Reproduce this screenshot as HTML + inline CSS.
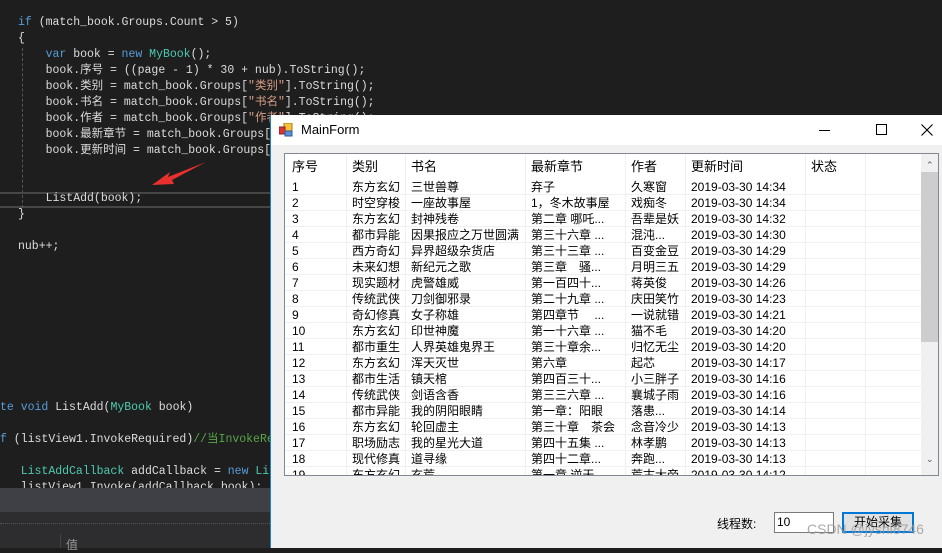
<!DOCTYPE html>
<html><head><meta charset="utf-8"><style>
*{margin:0;padding:0;box-sizing:border-box}
body{width:942px;height:548px;overflow:hidden;background:#1e1e1e;position:relative;font-family:"Liberation Sans","Noto Sans CJK SC",sans-serif}
.code{position:absolute;left:0;font-family:"Liberation Mono","Noto Sans CJK SC",monospace;font-size:11.5px;color:#dcdcdc;white-space:pre;line-height:16px}
.k{color:#569cd6}.t{color:#4ec9b0}.s{color:#d69d85}.c{color:#57a64a}
.win{position:absolute;left:270px;top:115px;width:672px;height:433px;background:#f0f0f0;border-left:1px solid #1883d7}
.tb{height:30px;background:#fff;position:relative;font-size:13px;color:#000}
.lv{position:absolute;left:13px;top:38px;width:655px;height:323px;background:#fff;border:1px solid #828790;overflow:hidden}
.row{position:absolute;left:0;height:16px;width:636px;border-bottom:1px solid #f0f0f0;font-size:12px;line-height:16px;color:#000}
.row span{position:absolute;top:0;white-space:nowrap;overflow:hidden}
.vl{position:absolute;top:0;width:1px;height:323px;background:#f0f0f0}
</style></head><body>
<div style="position:absolute;left:0;top:192px;width:270px;height:16px;border-top:2px solid #464646;border-bottom:2px solid #464646"></div>
<div class="code" style="top:15px;left:18px"><span class="k">if</span> (match_book.Groups.Count &gt; 5)
{
    <span class="k">var</span> book = <span class="k">new</span> <span class="t">MyBook</span>();
    book.序号 = ((page - 1) * 30 + nub).ToString();
    book.类别 = match_book.Groups[<span class="s">"类别"</span>].ToString();
    book.书名 = match_book.Groups[<span class="s">"书名"</span>].ToString();
    book.作者 = match_book.Groups[<span class="s">"作者"</span>].ToString();
    book.最新章节 = match_book.Groups[<span class="s">"最新章节"</span>];
    book.更新时间 = match_book.Groups[<span class="s">"更新时间"</span>];


    ListAdd(book);
}

nub++;</div>
<div style="position:absolute;left:22px;top:48px;width:0;height:160px;border-left:1px dashed #555"></div>
<svg style="position:absolute;left:150px;top:160px" width="60" height="30"><polygon points="2,25 20,12 18,17 56,2 22,20 24,24" fill="#e8312f"/></svg>
<div class="code" style="top:400px"><span class="k">te void</span> ListAdd(<span class="t">MyBook</span> book)

<span class="k">f</span> (listView1.InvokeRequired)<span class="c">//当InvokeRequired</span>

   <span class="t">ListAddCallback</span> addCallback = <span class="k">new</span> <span class="t">ListAdd</span>
   listView1.Invoke(addCallback,book);</div>
<div style="position:absolute;left:0;top:488px;width:270px;height:24px;background:#3f3f46"></div>
<div style="position:absolute;left:0;top:512px;width:270px;height:36px;background:#2d2d30"></div>
<div style="position:absolute;left:0;top:523px;width:270px;border-top:1px dotted #555"></div>
<div style="position:absolute;left:60px;top:534px;width:1px;height:14px;background:#444"></div>
<div style="position:absolute;left:66px;top:536px;color:#999;font-size:12px">值</div>
<div class="win">
<div class="tb">
<svg style="position:absolute;left:8px;top:8px" width="14" height="14"><rect x="5" y="0" width="8" height="8" fill="#f6c23c" stroke="#a87a10"/><rect x="0" y="4" width="6" height="7" fill="#d33" stroke="#822"/><rect x="6" y="8" width="7" height="5" fill="#5a8fd8" stroke="#2b5aa0"/></svg>
<span style="position:absolute;left:30px;top:7px">MainForm</span>
<div style="position:absolute;left:548px;top:15px;width:11px;height:1px;background:#000"></div>
<div style="position:absolute;left:605px;top:9px;width:11px;height:11px;border:1px solid #000"></div>
<svg style="position:absolute;left:650px;top:9px" width="12" height="12"><path d="M0.5 0.5L11.5 11.5M11.5 0.5L0.5 11.5" stroke="#000" stroke-width="1.1"/></svg>
</div>
<div class="lv">
<div style="position:absolute;left:0;top:0;height:25px;width:636px;font-size:13px;line-height:25px">
<span style="position:absolute;left:7px">序号</span><span style="position:absolute;left:67px">类别</span><span style="position:absolute;left:126px">书名</span><span style="position:absolute;left:246px">最新章节</span><span style="position:absolute;left:346px">作者</span><span style="position:absolute;left:406px">更新时间</span><span style="position:absolute;left:526px">状态</span>
</div>
<div class="vl" style="left:61px"></div><div class="vl" style="left:120px"></div><div class="vl" style="left:240px"></div><div class="vl" style="left:340px"></div><div class="vl" style="left:400px"></div><div class="vl" style="left:520px"></div><div class="vl" style="left:580px"></div>
<div id="rows"></div>
<div style="position:absolute;left:636px;top:0;width:17px;height:321px;background:#f0f0f0">
<div style="position:absolute;left:5px;top:6px;font-size:9px;color:#555">&#8963;</div>
<div style="position:absolute;left:0;top:18px;width:17px;height:170px;background:#cdcdcd"></div>
<div style="position:absolute;left:5px;top:300px;font-size:9px;color:#555">&#8964;</div>
</div>
</div>
<div style="position:absolute;left:446px;top:400px;font-size:12px">线程数:</div>
<div style="position:absolute;left:503px;top:397px;width:60px;height:21px;background:#fff;border:1px solid #7a7a7a;font-size:12px;line-height:19px;padding-left:2px">10</div>
<div style="position:absolute;left:571px;top:397px;width:72px;height:21px;background:#e1e1e1;border:2px solid #0078d7;font-size:12px;line-height:17px;text-align:center">开始采集</div>
<div style="position:absolute;left:536px;top:406px;font-size:14px;color:rgba(150,150,150,.8)">CSDN @jyshi8746</div>
</div>
<script>
var d=[["1","东方玄幻","三世兽尊","弃子","久寒窗","34"],["2","时空穿梭","一座故事屋","1，冬木故事屋","戏痴冬","34"],["3","东方玄幻","封神残卷","第二章 哪吒...","吾辈是妖","32"],["4","都市异能","因果报应之万世圆满","第三十六章 ...","混沌...","30"],["5","西方奇幻","异界超级杂货店","第三十三章 ...","百变金豆","29"],["6","未来幻想","新纪元之歌","第三章　骚...","月明三五","29"],["7","现实题材","虎警雄威","第一百四十...","蒋英俊","26"],["8","传统武侠","刀剑御邪录","第二十九章 ...","庆田笑竹","23"],["9","奇幻修真","女子称雄","第四章节　 ...","一说就错","21"],["10","东方玄幻","印世神魔","第一十六章 ...","猫不毛","20"],["11","都市重生","人界英雄鬼界王","第三十章余...","归忆无尘","20"],["12","东方玄幻","浑天灭世","第六章","起芯","17"],["13","都市生活","镇天棺","第四百三十...","小三胖子","16"],["14","传统武侠","剑语含香","第三三六章 ...","襄城子雨","16"],["15","都市异能","我的阴阳眼睛","第一章：阳眼","落患...","14"],["16","东方玄幻","轮回虚主","第三十章　茶会","念音冷少","13"],["17","职场励志","我的星光大道","第四十五集 ...","林孝鹏","13"],["18","现代修真","道寻缘","第四十二章...","奔跑...","13"],["19","东方玄幻","玄荒","第一章 逆天...","荒古大帝","12"]];
var h="",L=[7,67,126,246,346,406],W=[54,54,114,96,56,114];
d.forEach(function(r,i){h+='<div class="row" style="top:'+(25+i*16)+'px">';for(var j=0;j<6;j++){var t=j==5?"2019-03-30 14:"+r[5]:r[j];h+='<span style="left:'+L[j]+'px;width:'+W[j]+'px">'+t+'</span>';}h+='</div>';});
document.getElementById("rows").innerHTML=h;
</script>
</body></html>
